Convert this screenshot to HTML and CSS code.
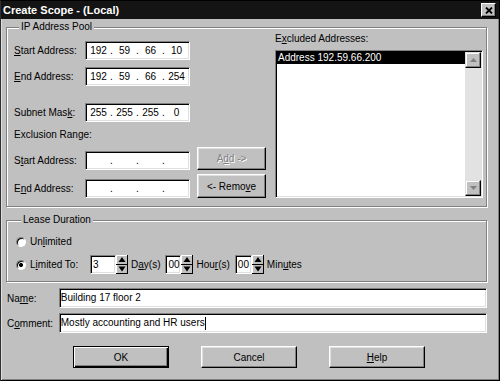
FILE: index.html
```html
<!DOCTYPE html>
<html lang="en">

<head>
	<meta charset="UTF-8">
	<title>Create Scope - (Local)</title>
	<meta name="viewport" content="width=device-width, initial-scale=1.0">
	<link rel="stylesheet" href="styles.css">
</head>

<body>

	<!-- petites fleches des compteurs, reutilisees plus bas -->
	<svg class="defs" width="0" height="0">
		<symbol id="spin" viewBox="0 0 12 19">
			<rect width="12" height="19" fill="#c0c0c0" />
			<rect x="0" y="0" width="11" height="1" fill="#fff" />
			<rect x="0" y="0" width="1" height="9" fill="#fff" />
			<rect x="0" y="10" width="1" height="8" fill="#fff" />
			<rect x="11" y="0" width="1" height="19" fill="#000" />
			<rect x="0" y="18" width="12" height="1" fill="#000" />
			<rect x="0" y="9" width="12" height="1" fill="#000" />
			<path d="M6 2 L9.5 7 H2.5 Z" fill="#000" />
			<path d="M2.5 11.5 H9.5 L6 16.5 Z" fill="#000" />
		</symbol>
	</svg>

	<div class="window">
		<div class="titleBar">
			<span class="titleText">Create Scope - (Local)</span>
			<span class="closeBox">
				<svg width="8" height="7" viewBox="0 0 8 7">
					<path d="M1 0.5 L7 6.5 M7 0.5 L1 6.5" stroke="#000" stroke-width="1.8" />
				</svg>
			</span>
		</div>
		<!-- /TITRE -->

		<div class="dialog">

			<div class="group poolGroup">
				<div class="groupTitle">IP Address Pool</div>
				<div class="poolColumns">
					<div class="poolLeft">
						<div class="row rowFirst">
							<span class="label"><u>S</u>tart Address:</span>
							<div class="ipBox"><span>192</span><i>.</i><span>59</span><i>.</i><span>66</span><i>.</i><span>10</span></div>
						</div>
						<div class="row rowSecond">
							<span class="label"><u>E</u>nd Address:</span>
							<div class="ipBox"><span>192</span><i>.</i><span>59</span><i>.</i><span>66</span><i>.</i><span>254</span></div>
						</div>
						<div class="row rowMask">
							<span class="label">Subnet Mas<u>k</u>:</span>
							<div class="ipBox"><span>255</span><i>.</i><span>255</span><i>.</i><span>255</span><i>.</i><span>0</span></div>
						</div>

						<div class="sectionLabel">Exclusion Range:</div>

						<div class="row rowButton rowAdd">
							<span class="label">S<u>t</u>art Address:</span>
							<div class="ipBox"><span></span><i>.</i><span></span><i>.</i><span></span><i>.</i><span></span></div>
							<button class="btn btnSmall" disabled>A<u>d</u>d -&gt;</button>
						</div>
						<div class="row rowButton rowRemove">
							<span class="label">E<u>n</u>d Address:</span>
							<div class="ipBox"><span></span><i>.</i><span></span><i>.</i><span></span><i>.</i><span></span></div>
							<button class="btn btnSmall">&lt;- Remo<u>v</u>e</button>
						</div>
					</div>

					<div class="poolRight">
						<div class="listLabel">E<u>x</u>cluded Addresses:</div>
						<div class="listBox">
							<div class="listItems">
								<div class="listItem selected">Address 192.59.66.200</div>
							</div>
							<div class="scrollBar">
								<span class="scrollBtn">
									<svg width="7" height="4" viewBox="0 0 7 4"><path d="M3.5 0 L7 4 H0 Z" fill="#808080" /></svg>
								</span>
								<span class="scrollTrack"></span>
								<span class="scrollBtn">
									<svg width="7" height="4" viewBox="0 0 7 4"><path d="M0 0 H7 L3.5 4 Z" fill="#808080" /></svg>
								</span>
							</div>
						</div>
					</div>
				</div>
			</div>
			<!-- /IP ADDRESS POOL -->

			<div class="group leaseGroup">
				<div class="groupTitle">Lease Duration</div>
				<div class="radioRow">
					<span class="radio"></span>
					<span>Un<u>l</u>imited</span>
				</div>
				<div class="radioRow limitedRow">
					<span class="radio checked"></span>
					<span class="limitedLabel">L<u>i</u>mited To:</span>
					<span class="spinInput spinDays">3</span>
					<svg class="spinArrows" width="12" height="19"><use href="#spin" /></svg>
					<span class="unit">D<u>a</u>y(s)</span>
					<span class="spinInput spinHours">00</span>
					<svg class="spinArrows" width="12" height="19"><use href="#spin" /></svg>
					<span class="unit">Hou<u>r</u>(s)</span>
					<span class="spinInput spinMinutes">00</span>
					<svg class="spinArrows" width="12" height="19"><use href="#spin" /></svg>
					<span class="unit">Min<u>u</u>tes</span>
				</div>
			</div>
			<!-- /LEASE DURATION -->

			<div class="fieldRow fieldName">
				<span class="fieldLabel">Na<u>m</u>e:</span>
				<div class="textBox">Building 17 floor 2</div>
			</div>
			<div class="fieldRow fieldComment">
				<span class="fieldLabel">C<u>o</u>mment:</span>
				<div class="textBox">Mostly accounting and HR users<span class="caret"></span></div>
			</div>

			<div class="buttonBar">
				<button class="btn btnWide btnDefault">OK</button>
				<button class="btn btnWide">Cancel</button>
				<button class="btn btnWide"><u>H</u>elp</button>
			</div>

		</div>
		<!-- /DIALOG -->
	</div>

</body>

</html>
```

FILE: styles.css
```css
/*Reset*/

* {
	margin: 0;
	padding: 0;
	box-sizing: border-box;
}

html,
body {
	width: 500px;
	height: 381px;
}

body {
	font-family: "Liberation Sans", Arial, Helvetica, sans-serif;
	font-size: 10px;
	color: #000;
	background-color: #c0c0c0;
	overflow: hidden;
}

u {
	text-underline-offset: 1px;
}

.defs {
	position: absolute;
}

/*Cadre de la fenetre*/
.window {
	width: 500px;
	height: 381px;
	border: 1px solid #000;
	border-left-color: #303030;
	box-shadow: inset 1px 0 0 #dfdfdf, inset -1px -1px 0 #808080;
	display: flex;
	flex-direction: column;
}

.titleBar {
	height: 18px;
	background-color: #141414;
	color: #fff;
	display: flex;
	align-items: center;
	justify-content: space-between;
	padding: 0 3px 0 2px;
}

.titleText {
	font-size: 11px;
	font-weight: bold;
}

.closeBox {
	width: 15px;
	height: 14px;
	background-color: #c0c0c0;
	border: 1px solid;
	border-color: #fff #000 #000 #fff;
	box-shadow: inset -1px -1px 0 #808080;
	display: flex;
	align-items: center;
	justify-content: center;
}

.dialog {
	flex: 1;
	padding: 8px 12px 0 5px;
	display: flex;
	flex-direction: column;
}

/*Cadres groupes (bordure gravee)*/
.group {
	border: 1px solid #808080;
	box-shadow: inset 1px 1px 0 #fff, 1px 1px 0 #fff;
}

.groupTitle {
	width: fit-content;
	height: 13px;
	line-height: 13px;
	margin: -8px 0 0 5px;
	padding: 0 2px;
	background-color: #c0c0c0;
}

.poolGroup {
	padding: 0 3px 8px 7px;
}

.poolColumns {
	display: flex;
}

.poolLeft {
	width: 252px;
}

.row {
	display: flex;
	align-items: center;
	height: 19px;
}

.rowFirst {
	margin-top: 8px;
}

.rowSecond {
	margin-top: 7px;
}

.rowMask {
	margin-top: 17px;
}

.sectionLabel {
	height: 13px;
	line-height: 13px;
	margin-top: 6px;
}

.rowButton {
	height: 23px;
	align-items: flex-end;
}

.rowAdd {
	margin-top: 6px;
}

.rowRemove {
	margin-top: 4px;
	height: 24px;
}

.label {
	width: 71px;
	line-height: 19px;
}

/*Champs creux*/
.ipBox,
.textBox,
.spinInput,
.listBox {
	background-color: #fff;
	border: 1px solid;
	border-color: #808080 #fff #fff #808080;
	box-shadow: inset 1px 1px 0 #000, inset -1px -1px 0 #dfdfdf;
}

.ipBox {
	width: 105px;
	height: 19px;
	display: flex;
	align-items: center;
	padding-left: 2px;
}

.ipBox span {
	width: 21px;
	text-align: center;
}

.ipBox i {
	font-style: normal;
	width: 5px;
	text-align: center;
}

/*Boutons en relief*/
.btn {
	font: inherit;
	color: #000;
	background-color: #c0c0c0;
	border: 1px solid;
	border-color: #fff #000 #000 #fff;
	box-shadow: inset -1px -1px 0 #808080, inset 1px 1px 0 #dfdfdf;
}

.btn:disabled {
	color: #808080;
	text-shadow: 1px 1px 0 #fff;
}

.btnSmall {
	width: 69px;
	height: 100%;
	margin-left: 7px;
}

.poolRight {
	width: 208px;
	margin-left: 9px;
}

.listLabel {
	height: 13px;
	line-height: 13px;
	margin-top: -1px;
}

.listBox {
	height: 148px;
	margin-top: 5px;
	padding: 1px;
	display: flex;
}

.listItems {
	flex: 1;
}

.listItem {
	height: 12px;
	line-height: 12px;
	padding-left: 1px;
}

.selected {
	background-color: #000;
	color: #fff;
}

.scrollBar {
	width: 16px;
	display: flex;
	flex-direction: column;
	background-color: #e2e2e2;
}

.scrollBtn {
	height: 16px;
	background-color: #c0c0c0;
	border: 1px solid;
	border-color: #dfdfdf #000 #000 #dfdfdf;
	box-shadow: inset -1px -1px 0 #808080, inset 1px 1px 0 #fff;
	display: flex;
	align-items: center;
	justify-content: center;
}

.scrollTrack {
	flex: 1;
}

/*Duree du bail*/
.leaseGroup {
	margin-top: 13px;
	padding: 0 3px 7px 9px;
}

.radioRow {
	display: flex;
	align-items: center;
	height: 13px;
	margin-top: 9px;
}

.radio {
	width: 10px;
	height: 10px;
	border-radius: 50%;
	background-color: #fff;
	border: 1px solid;
	border-color: #808080 #fff #fff #808080;
	box-shadow: inset 1px 1px 0 #000;
	margin-right: 4px;
}

.radio.checked {
	background: radial-gradient(circle, #000 0 1.8px, #fff 2.3px);
}

.limitedRow {
	height: 19px;
	margin-top: 7px;
}

.limitedLabel {
	width: 60px;
}

.spinInput {
	height: 19px;
	line-height: 17px;
	padding-left: 2px;
}

.spinDays {
	width: 26px;
}

.spinHours {
	width: 16px;
}

.spinMinutes {
	width: 17px;
}

.spinArrows {
	display: block;
}

.unit {
	margin: 0 5px 0 3px;
}

/*Nom et commentaire*/
.fieldRow {
	display: flex;
	align-items: center;
	height: 20px;
}

.fieldName {
	margin-top: 6px;
}

.fieldComment {
	margin-top: 5px;
}

.fieldLabel {
	width: 53px;
	padding-left: 1px;
}

.textBox {
	width: 430px;
	height: 20px;
	line-height: 18px;
	padding-left: 1px;
}

.caret {
	display: inline-block;
	width: 1px;
	height: 13px;
	background-color: #000;
	vertical-align: middle;
}

/*Boutons du bas*/
.buttonBar {
	display: flex;
	gap: 32px;
	margin-top: 13px;
	padding-left: 67px;
}

.btnWide {
	width: 96px;
	height: 22px;
}

.btnDefault {
	border-color: #000;
	box-shadow: inset 1px 1px 0 #fff, inset -1px -1px 0 #000, inset -2px -2px 0 #808080;
}
```
